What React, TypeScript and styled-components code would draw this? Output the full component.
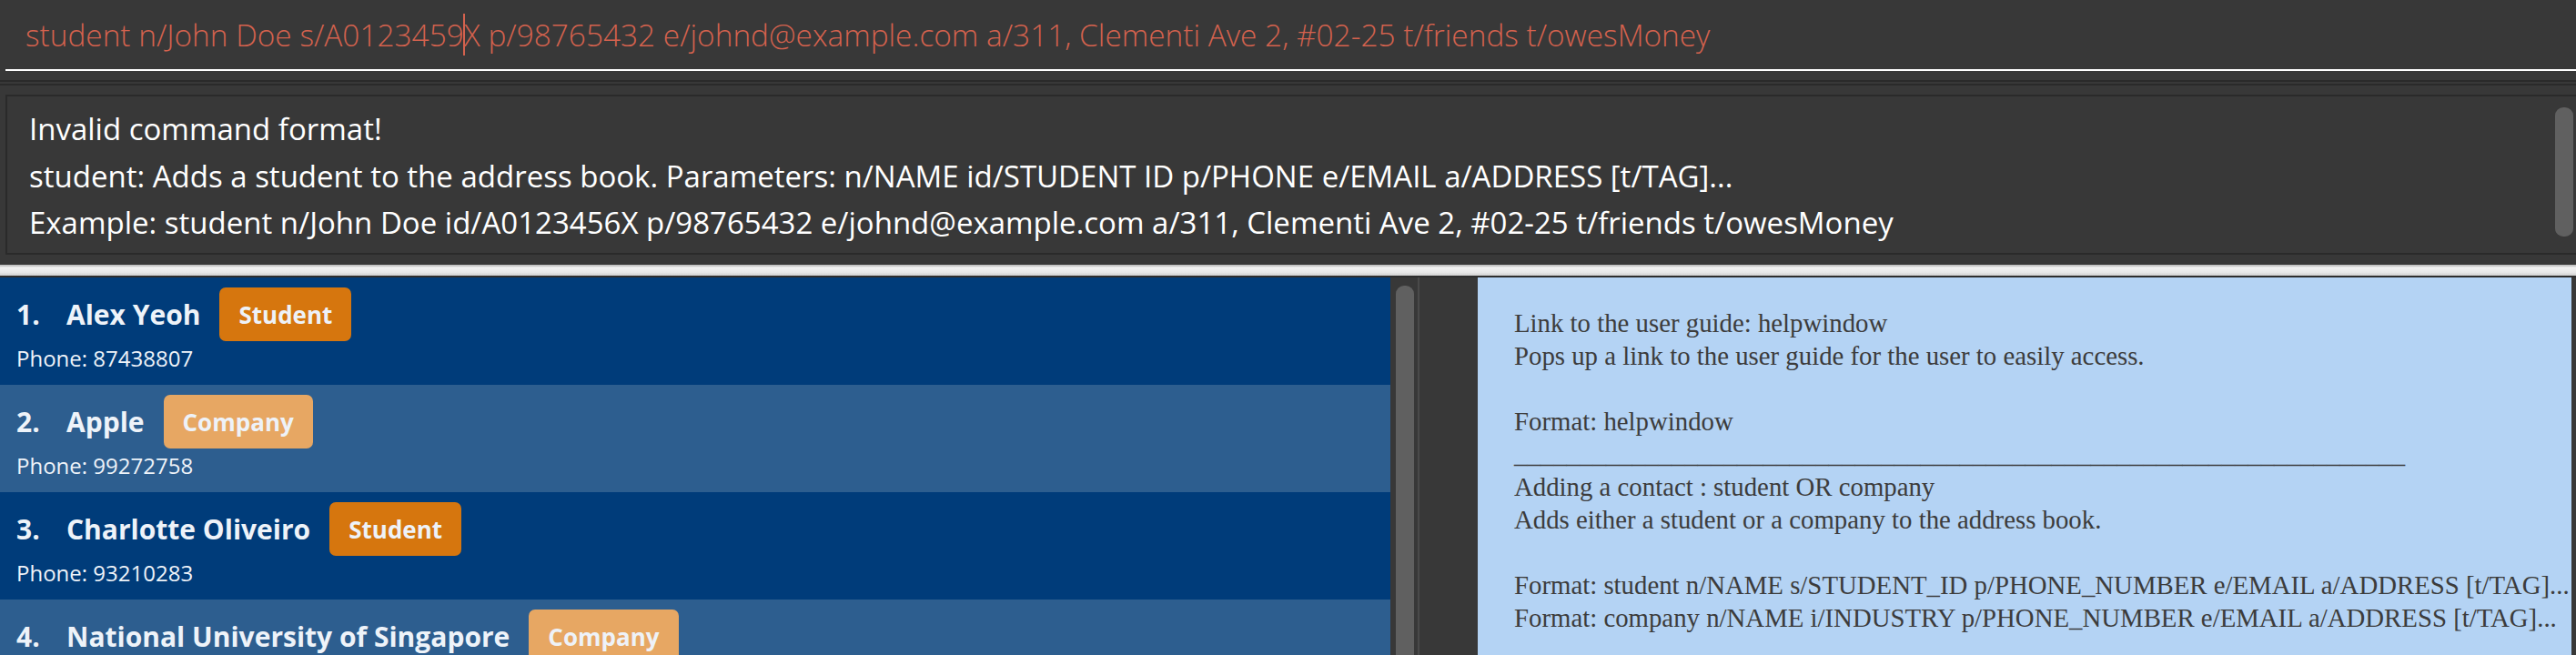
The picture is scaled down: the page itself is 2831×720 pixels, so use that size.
import React from 'react';
import styled, { createGlobalStyle } from 'styled-components';

const GlobalStyle = createGlobalStyle`
  html, body {
    margin: 0;
    padding: 0;
    background: #383838;
    overflow: hidden;
  }
  * {
    box-sizing: border-box;
  }
`;

const Window = styled.div`
  width: 2831px;
  height: 720px;
  display: flex;
  flex-direction: column;
  background: #383838;
  font-family: 'Open Sans', 'Noto Sans', sans-serif;
  overflow: hidden;
`;

const CommandBar = styled.div`
  height: 88px;
  padding: 0 0 0 6px;
  flex-shrink: 0;
`;

const CommandField = styled.div`
  height: 78px;
  border-bottom: 2px solid #ffffff;
  padding-left: 22px;
  display: flex;
  align-items: center;
  color: #d4624e;
  font-size: 33.4px;
  font-weight: 300;
  white-space: pre;
`;

const Caret = styled.span`
  display: inline-block;
  width: 2px;
  height: 46px;
  margin: 0 -1px;
  background: #d4624e;
  vertical-align: middle;
`;

const Rule = styled.div`
  height: 2px;
  background: #2a2a2a;
  flex-shrink: 0;
`;

const Spacer = styled.div<{ $h: number }>`
  height: ${(p) => p.$h}px;
  flex-shrink: 0;
`;

const ResultBox = styled.div`
  position: relative;
  height: 176px;
  margin-left: 6px;
  border: 2px solid #2a2a2a;
  border-right: none;
  padding: 10px 0 0 24px;
  color: #ffffff;
  font-size: 33px;
  line-height: 51.5px;
  white-space: pre;
  flex-shrink: 0;
`;

const ScrollThumb = styled.div<{ $top: number; $height: number; $right: number }>`
  position: absolute;
  top: ${(p) => p.$top}px;
  right: ${(p) => p.$right}px;
  width: 20px;
  height: ${(p) => p.$height}px;
  border-radius: 9px;
  background: #606060;
`;

const SplitDivider = styled.div`
  height: 14px;
  flex-shrink: 0;
  border-bottom: 2px solid #2e2e2e;
  background: linear-gradient(#c3c3c3 0, #c3c3c3 10%, #f3f3f3 25%, #e8e8e8 70%, #d0d0d0 100%);
`;

const Main = styled.div`
  flex: 1;
  display: flex;
  min-height: 0;
`;

const ListPanel = styled.div`
  width: 1528px;
  display: flex;
  flex-direction: column;
  overflow: hidden;
`;

const ListTrack = styled.div`
  position: relative;
  width: 32px;
  border-right: 2px solid #4a4a4a;
`;

const Gutter = styled.div`
  width: 64px;
`;

const Row = styled.div<{ $alt: boolean }>`
  height: 118px;
  flex-shrink: 0;
  padding: 11px 18px 0;
  background: ${(p) => (p.$alt ? '#2d5e8f' : '#003c7a')};
`;

const NameLine = styled.div`
  height: 59px;
  display: flex;
  align-items: center;
  color: #eef3f9;
  font-size: 30px;
  font-weight: 700;
`;

const Index = styled.span`
  width: 55px;
  flex-shrink: 0;
`;

const Name = styled.span`
  margin-right: 21px;
  white-space: nowrap;
`;

const Tag = styled.span<{ $kind: 'Student' | 'Company' }>`
  height: 59px;
  padding: 0 21px;
  display: flex;
  align-items: center;
  border-radius: 7px;
  font-size: 26px;
  font-weight: 700;
  color: #eef2f8;
  background: ${(p) => (p.$kind === 'Student' ? '#d6760e' : '#e7a763')};
`;

const Phone = styled.div`
  margin-top: 4px;
  color: #eef3f9;
  font-size: 24px;
  line-height: 30px;
`;

const HelpPanel = styled.div`
  width: 1202px;
  background: #b4d3f4;
  padding: 32px 0 0 40px;
  overflow: hidden;
  color: #3c3c3c;
  font-family: 'Liberation Serif', 'DejaVu Serif', serif;
  font-size: 28.8px;
  line-height: 36px;
  white-space: pre;
`;

const contacts = [
  { name: 'Alex Yeoh', kind: 'Student' as const, phone: '87438807' },
  { name: 'Apple', kind: 'Company' as const, phone: '99272758' },
  { name: 'Charlotte Oliveiro', kind: 'Student' as const, phone: '93210283' },
  { name: 'National University of Singapore', kind: 'Company' as const, phone: '65166666' },
];

const helpLines = [
  'Link to the user guide: helpwindow',
  'Pops up a link to the user guide for the user to easily access.',
  '',
  'Format: helpwindow',
  '_'.repeat(68),
  'Adding a contact : student OR company',
  'Adds either a student or a company to the address book.',
  '',
  'Format: student n/NAME s/STUDENT_ID p/PHONE_NUMBER e/EMAIL a/ADDRESS [t/TAG]...',
  'Format: company n/NAME i/INDUSTRY p/PHONE_NUMBER e/EMAIL a/ADDRESS [t/TAG]...',
];

export default function App() {
  return (
    <Window>
      <GlobalStyle />
      <CommandBar>
        <CommandField>
          student n/John Doe s/A0123459
          <Caret />
          X p/98765432 e/johnd@example.com a/311, Clementi Ave 2, #02-25 t/friends t/owesMoney
        </CommandField>
      </CommandBar>
      <Rule />
      <Spacer $h={2} />
      <Rule />
      <Spacer $h={10} />
      <ResultBox>
        <div>Invalid command format!</div>
        <div>student: Adds a student to the address book. Parameters: n/NAME id/STUDENT ID p/PHONE e/EMAIL a/ADDRESS [t/TAG]...</div>
        <div>Example: student n/John Doe id/A0123456X p/98765432 e/johnd@example.com a/311, Clementi Ave 2, #02-25 t/friends t/owesMoney</div>
        <ScrollThumb $top={12} $height={142} $right={3} />
      </ResultBox>
      <Spacer $h={11} />
      <SplitDivider />
      <Main>
        <ListPanel>
          {contacts.map((c, i) => (
            <Row key={c.name} $alt={i % 2 === 1}>
              <NameLine>
                <Index>{i + 1}.</Index>
                <Name>{c.name}</Name>
                <Tag $kind={c.kind}>{c.kind}</Tag>
              </NameLine>
              <Phone>Phone: {c.phone}</Phone>
            </Row>
          ))}
        </ListPanel>
        <ListTrack>
          <ScrollThumb $top={9} $height={600} $right={4} />
        </ListTrack>
        <Gutter />
        <HelpPanel>
          {helpLines.map((l, i) => (
            <div key={i}>{l || ' '}</div>
          ))}
        </HelpPanel>
      </Main>
    </Window>
  );
}
